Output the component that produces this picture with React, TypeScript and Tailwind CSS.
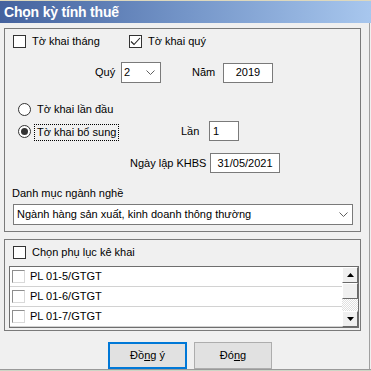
import React from "react";

const Check = ({ checked = false }: { checked?: boolean }) => (
  <span className="w-[13px] h-[13px] border border-[#333333] bg-white flex items-center justify-center shrink-0">
    {checked && (
      <svg width="11" height="9" viewBox="0 0 11 9">
        <path d="M1 4.5 L4 7.5 L10 1" stroke="#222" strokeWidth="1.1" fill="none" />
      </svg>
    )}
  </span>
);

const Radio = ({ selected = false }: { selected?: boolean }) => (
  <span className="w-[13px] h-[13px] rounded-full border border-[#333333] bg-white flex items-center justify-center shrink-0">
    {selected && <span className="w-[7px] h-[7px] rounded-full bg-[#333333]" />}
  </span>
);

const Chevron = () => (
  <svg width="9" height="5" viewBox="0 0 9 5" className="shrink-0">
    <path d="M0.5 0.5 L4.5 4.5 L8.5 0.5" stroke="#606060" strokeWidth="1" fill="none" />
  </svg>
);

const ListRow = ({ label }: { label: string }) => (
  <div className="h-[20px] border-b border-[#d2d2d2] flex items-center pl-[2px] bg-white">
    <span className="w-[13px] h-[13px] border-t border-l border-[#8e8e8e] border-r border-b border-r-[#d9d9d9] border-b-[#d9d9d9] bg-white shrink-0" />
    <span className="ml-[5px] text-black">{label}</span>
  </div>
);

const ScrollBtn = ({ up }: { up: boolean }) => (
  <div className="h-[16px] bg-[#f0f0f0] border border-t-white border-l-white border-r-[#696969] border-b-[#696969] flex items-center justify-center">
    <svg width="7" height="4" viewBox="0 0 7 4">
      {up ? <path d="M0 4 L3.5 0 L7 4 Z" fill="#000" /> : <path d="M0 0 L3.5 4 L7 0 Z" fill="#000" />}
    </svg>
  </div>
);

export default function App() {
  return (
    <div className="w-[371px] h-[371px] bg-[#f0f0f0] flex flex-col overflow-hidden font-['Liberation_Sans',Arial,sans-serif] text-[11px] leading-[13px] text-black">
      {/* Title bar */}
      <div className="h-[23px] shrink-0 border-t border-[#ddd8bd] bg-gradient-to-r from-[#44629e] via-[#7495c8] to-[#a8c7ee] flex items-center pl-[4px]">
        <span className="text-white font-bold text-[14px] leading-[16px] tracking-[-0.2px]">Chọn kỳ tính thuế</span>
      </div>

      {/* Body */}
      <div className="flex-1 flex flex-col border-r border-[#a0a0a0] w-[370px]">
        {/* Group 1 */}
        <div className="mt-[5px] ml-[4px] w-[357px] border border-[#7a7a7a] flex flex-col pt-[6px] pb-[6px]">
          {/* Row 1 */}
          <div className="h-[13px] flex items-center pl-[8px]">
            <div className="w-[116px] flex items-center">
              <Check />
              <span className="ml-[6px]">Tờ khai tháng</span>
            </div>
            <div className="flex items-center">
              <Check checked />
              <span className="ml-[6px]">Tờ khai quý</span>
            </div>
          </div>
          {/* Row 2 */}
          <div className="mt-[14px] h-[21px] flex items-center pl-[90px]">
            <span className="w-[26px]">Quý</span>
            <div className="w-[40px] h-[21px] bg-white border border-[#7a7a7a] flex items-center justify-between pl-[2px] pr-[5px]">
              <span>2</span>
              <Chevron />
            </div>
            <span className="ml-[31px] w-[31px]">Năm</span>
            <div className="w-[50px] h-[20px] bg-white border border-[#7a7a7a] flex items-center justify-center">
              2019
            </div>
          </div>
          {/* Row 3 */}
          <div className="mt-[20px] h-[13px] flex items-center pl-[13px]">
            <Radio />
            <span className="ml-[6px]">Tờ khai lần đầu</span>
          </div>
          {/* Row 4 */}
          <div className="mt-[5px] h-[20px] flex items-center pl-[13px]">
            <Radio selected />
            <span className="ml-[3px] w-[85px] h-[17px] border border-dotted border-black flex items-center pl-[2px] mt-[3px]">
              Tờ khai bổ sung
            </span>
            <span className="ml-[62px] w-[28px]">Lần</span>
            <div className="w-[30px] h-[20px] bg-white border border-[#7a7a7a] flex items-center pl-[3px]">1</div>
          </div>
          {/* Row 5 */}
          <div className="mt-[12px] h-[20px] flex items-center pl-[125px]">
            <span className="w-[80px]">Ngày lập KHBS</span>
            <div className="w-[70px] h-[20px] bg-white border border-[#7a7a7a] flex items-center justify-center">
              31/05/2021
            </div>
          </div>
          {/* Row 6 */}
          <div className="mt-[14px] h-[13px] flex items-center pl-[7px]">Danh mục ngành nghề</div>
          {/* Row 7 */}
          <div className="mt-[4px] pl-[8px]">
            <div className="w-[340px] h-[21px] bg-white border border-[#7a7a7a] flex items-center justify-between pl-[3px] pr-[4px]">
              <span>Ngành hàng sản xuất, kinh doanh thông thường</span>
              <Chevron />
            </div>
          </div>
        </div>

        {/* Group 2 */}
        <div className="mt-[7px] ml-[4px] w-[357px] border border-[#7a7a7a] flex flex-col pt-[6px] pb-[2px]">
          <div className="h-[13px] flex items-center pl-[8px]">
            <Check />
            <span className="ml-[6px]">Chọn phụ lục kê khai</span>
          </div>
          <div className="mt-[7px] ml-[4px] w-[350px] h-[62px] border border-[#6e6e6e] bg-white flex">
            <div className="flex-1 flex flex-col">
              <ListRow label="PL 01-5/GTGT" />
              <ListRow label="PL 01-6/GTGT" />
              <ListRow label="PL 01-7/GTGT" />
            </div>
            <div className="w-[16px] flex flex-col">
              <ScrollBtn up />
              <div className="h-[16px] bg-[#f0f0f0] border border-t-white border-l-white border-r-[#696969] border-b-[#696969]" />
              <div className="flex-1 bg-[repeating-conic-gradient(#ffffff_0_25%,#e0e0e0_0_50%)] bg-[length:2px_2px]" />
              <ScrollBtn up={false} />
            </div>
          </div>
        </div>

        {/* Buttons */}
        <div className="mt-[11px] flex pl-[108px] gap-[7px]">
          <button className="w-[79px] h-[27px] bg-[#e1e1e1] border-2 border-[#0078d7] flex items-center justify-center font-normal text-[11px]">
            <span>
              Đồ<span className="underline">n</span>g ý
            </span>
          </button>
          <button className="w-[78px] h-[27px] bg-[#e1e1e1] border border-[#adadad] flex items-center justify-center font-normal text-[11px]">
            <span>
              Đó<span className="underline">n</span>g
            </span>
          </button>
        </div>
      </div>
      <div className="h-[2px] shrink-0 border-t border-[#9a9a9a] bg-[#cdd6c6]" />
    </div>
  );
}
